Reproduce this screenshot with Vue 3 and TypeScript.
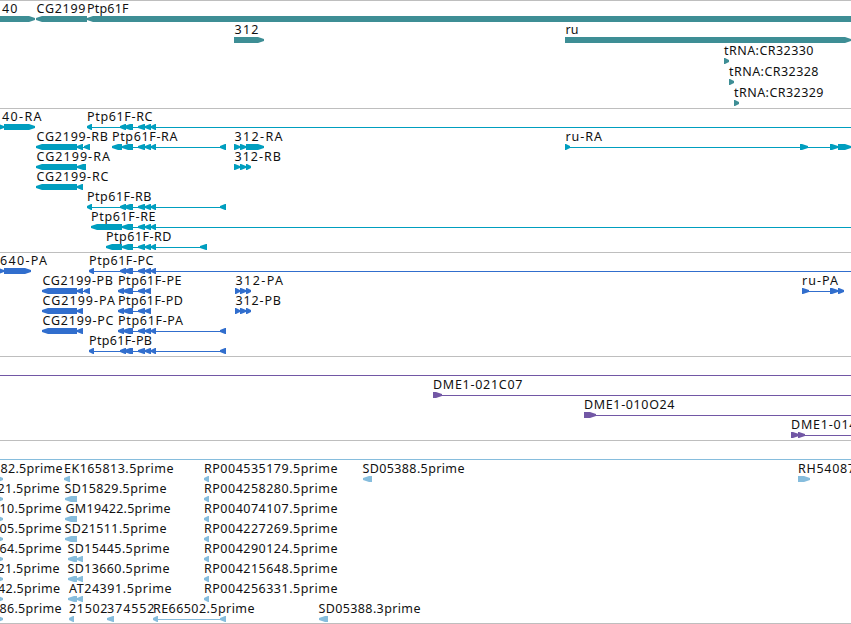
<template>
  <main class="browser">
    <section
      v-for="track in tracks"
      :key="track.name"
      class="track"
      :class="track.name"
    >
      <svg class="canvas" width="851" :height="track.height">
        <g v-for="(f, i) in track.features" :key="i">
          <rect
            v-if="f.line"
            class="glyph"
            :x="f.line[0]"
            :y="19 + f.row * track.pitch"
            :width="f.line[1] - f.line[0]"
            height="1"
          />
          <polygon
            v-for="(e, j) in f.exons"
            :key="j"
            class="glyph"
            :points="arrow(e, 16 + f.row * track.pitch, f.dir)"
          />
          <text
            v-if="f.label"
            class="label"
            :x="f.from + 0.5"
            :y="13 + f.row * track.pitch"
            :textLength="f.to - f.from"
          >{{ f.label }}</text>
        </g>
      </svg>
    </section>
  </main>
</template>

<script setup lang="ts">
type Span = [number, number]

interface Feature {
  row: number
  label: string
  from: number
  to: number
  dir: 1 | -1
  exons: Span[]
  line?: Span
}

interface Track {
  name: string
  height: number
  pitch: number
  features: Feature[]
}

const END = 851

const feat = (
  row: number,
  label: string,
  from: number,
  to: number,
  dir: 1 | -1,
  exons: Span[],
  line?: Span
): Feature => ({ row, label, from, to, dir, exons, line })

// bar with a blunt pointed end in the direction of the strand
const arrow = ([a, b]: Span, y: number, dir: 1 | -1) => {
  const head = Math.min(6, b - a - 1)
  return dir === 1
    ? `${a},${y} ${b - head},${y} ${b},${y + 2} ${b},${y + 4} ${b - head},${y + 6} ${a},${y + 6}`
    : `${b},${y} ${a + head},${y} ${a},${y + 2} ${a},${y + 4} ${a + head},${y + 6} ${b},${y + 6}`
}

// exons shared by the Ptp61F transcripts
const common: Span[] = [[138, 145], [145, 151], [151, 156]]
const inner: Span[] = [[120, 126], [124, 133], ...common]
const short: Span[] = [[118, 124], [123, 133], [138, 145], [145, 151]]

const genes: Feature[] = [
  feat(0, '40', 1.5, 17, 1, [[-10, 35]]),
  feat(0, 'CG2199', 36, 85, -1, [[36, 87]]),
  feat(0, 'Ptp61F', 86.5, 128, -1, [[87, 860]]),
  feat(1, '312', 234, 258, 1, [[234, 264]]),
  feat(1, 'ru', 565, 578, 1, [[565, 851]]),
  feat(2, 'tRNA:CR32330', 723.5, 813, 1, [[724, 729]]),
  feat(3, 'tRNA:CR32328', 728.5, 818, 1, [[729, 734]]),
  feat(4, 'tRNA:CR32329', 733.5, 823, 1, [[734, 739]])
]

const transcripts: Feature[] = [
  feat(0, '40-RA', 1.5, 41, 1, [[-2, 4], [4, 35]]),
  feat(0, 'Ptp61F-RC', 86.5, 152, -1, [[87, 92], ...inner], [87, END]),
  feat(1, 'CG2199-RB', 36, 107.5, -1, [[36, 77], [77, 83], [84, 90]], [77, 90]),
  feat(1, 'Ptp61F-RA', 111.5, 177, -1, [[112, 122], [122, 133], ...common, [220, 226]], [112, 226]),
  feat(1, '312-RA', 234, 282, 1, [[234, 240], [240, 246], [246, 264]], [234, 264]),
  feat(1, 'ru-RA', 565, 601.5, 1, [[565, 570], [800, 808], [830, 838], [838, 851]], [565, END]),
  feat(2, 'CG2199-RA', 36, 109.5, -1, [[36, 77], [77, 86]], [77, 86]),
  feat(2, '312-RB', 234, 280.5, 1, [[234, 240], [240, 246], [246, 251]], [234, 251]),
  feat(3, 'CG2199-RC', 36, 108, -1, [[36, 77], [77, 83]], [77, 83]),
  feat(4, 'Ptp61F-RB', 86.5, 151, -1, [[87, 92], ...inner, [220, 226]], [87, 226]),
  feat(5, 'Ptp61F-RE', 90.5, 155, -1, [[91, 122], [122, 133], ...common], [91, END]),
  feat(6, 'Ptp61F-RD', 105.5, 171, -1, [[106, 122], [122, 133], ...common, [200, 207]], [106, 207])
]

const proteins: Feature[] = [
  feat(0, '640-PA', -0.5, 46.5, 1, [[-2, 4], [4, 31]]),
  feat(0, 'Ptp61F-PC', 88.5, 153, -1, [[89, 94], ...inner], [89, END]),
  feat(1, 'CG2199-PB', 42, 112.5, -1, [[42, 77], [77, 83], [84, 90]], [77, 90]),
  feat(1, 'Ptp61F-PE', 117.5, 181, -1, short, [118, 151]),
  feat(1, '312-PA', 235, 282.5, 1, [[235, 240], [240, 246], [246, 251]], [235, 251]),
  feat(1, 'ru-PA', 801.5, 837.5, 1, [[802, 809], [830, 838], [838, 844]], [802, 844]),
  feat(2, 'CG2199-PA', 42, 114.5, -1, [[42, 77], [77, 83]], [77, 83]),
  feat(2, 'Ptp61F-PD', 117.5, 182.5, -1, short, [118, 151]),
  feat(2, '312-PB', 235, 280.5, 1, [[235, 240], [240, 246], [246, 251]], [235, 251]),
  feat(3, 'CG2199-PC', 42, 113, -1, [[42, 77], [77, 83]], [77, 83]),
  feat(3, 'Ptp61F-PA', 117.5, 182.5, -1, [...short, [151, 156], [220, 226]], [118, 226]),
  feat(4, 'Ptp61F-PB', 88.5, 151.5, -1, [[89, 94], ...inner, [220, 226]], [89, 226])
]

const clones: Feature[] = [
  feat(0, '', 0, 0, 1, [], [0, END]),
  feat(1, 'DME1-021C07', 432.5, 522, 1, [[433, 442]], [433, END]),
  feat(2, 'DME1-010O24', 583.5, 674, 1, [[584, 596]], [584, END]),
  feat(3, 'DME1-014', 790.5, 856, 1, [[791, 799], [798, 805]], [791, END])
]

// reads cut off by the left edge: label, right end of the label
const cut: [string, number][] = [
  ['82.5prime', 62],
  ['21.5prime', 59],
  ['10.5prime', 61],
  ['05.5prime', 61],
  ['64.5prime', 61],
  ['21.5prime', 59],
  ['42.5prime', 59.5],
  ['86.5prime', 61]
]

const rpReads = ['4535179', '4258280', '4074107', '4227269', '4290124', '4215648', '4256331']

const ests: Feature[] = [
  feat(0, '', 0, 0, 1, [], [0, END]),
  ...cut.map(([label, to], i) => feat(i + 1, label, to - 62, to, 1, [[-3, 3]])),
  feat(1, 'EK165813.5prime', 63.5, 173, -1, [[64, 70]]),
  feat(2, 'SD15829.5prime', 64, 166, -1, [[65, 77]]),
  feat(3, 'GM19422.5prime', 65, 170, -1, [[65, 77]]),
  feat(4, 'SD21511.5prime', 64, 166, -1, [[65, 77]]),
  feat(5, 'SD15445.5prime', 67, 169, -1, [[68, 77], [77, 83]]),
  feat(6, 'SD13660.5prime', 67, 169, -1, [[68, 77], [77, 83]]),
  feat(7, 'AT24391.5prime', 68.5, 171, -1, [[68, 77], [77, 83]]),
  feat(8, '21502', 68.5, 107, -1, [[69, 74]]),
  feat(8, '374552', 106.5, 154, -1, [[107, 114]]),
  feat(8, 'RE66502.5prime', 152.5, 254, -1, [[153, 158], [220, 226]], [153, 226]),
  ...rpReads.map((id, i) => feat(i + 1, `RP00${id}.5prime`, 203.5, 337, -1, [[204, 209]])),
  feat(1, 'SD05388.5prime', 362, 464, -1, [[363, 372]]),
  feat(8, 'SD05388.3prime', 318, 420, -1, [[319, 328]]),
  feat(1, 'RH54087', 797.5, 854.5, 1, [[798, 810]])
]

const tracks: Track[] = [
  { name: 'genes', height: 107, pitch: 21, features: genes },
  { name: 'transcripts', height: 143, pitch: 20, features: transcripts },
  { name: 'proteins', height: 103, pitch: 20, features: proteins },
  { name: 'clones', height: 83, pitch: 20, features: clones },
  { name: 'ests', height: 182, pitch: 20, features: ests }
]
</script>

<style>
body {
  margin: 0;
  background: #fff;
}
</style>

<style scoped>
.browser {
  display: flex;
  flex-direction: column;
  width: 851px;
  height: 624px;
  box-sizing: border-box;
  overflow: hidden;
  border-bottom: 1px solid #bebebe;
}

.track {
  border-top: 1px solid #bebebe;
}

/* row offsets are counted from the separator above the track */
.canvas {
  display: block;
  overflow: visible;
}

.canvas g {
  transform: translateY(-1px);
}

.label {
  font: 12.5px "Noto Sans", "DejaVu Sans", sans-serif;
  fill: #111;
}

.genes .glyph {
  fill: #3e8e95;
}

.transcripts .glyph {
  fill: #009ebf;
}

.proteins .glyph {
  fill: #316ecd;
}

.clones .glyph {
  fill: #7257a5;
}

.ests .glyph {
  fill: #86bddd;
}
</style>
